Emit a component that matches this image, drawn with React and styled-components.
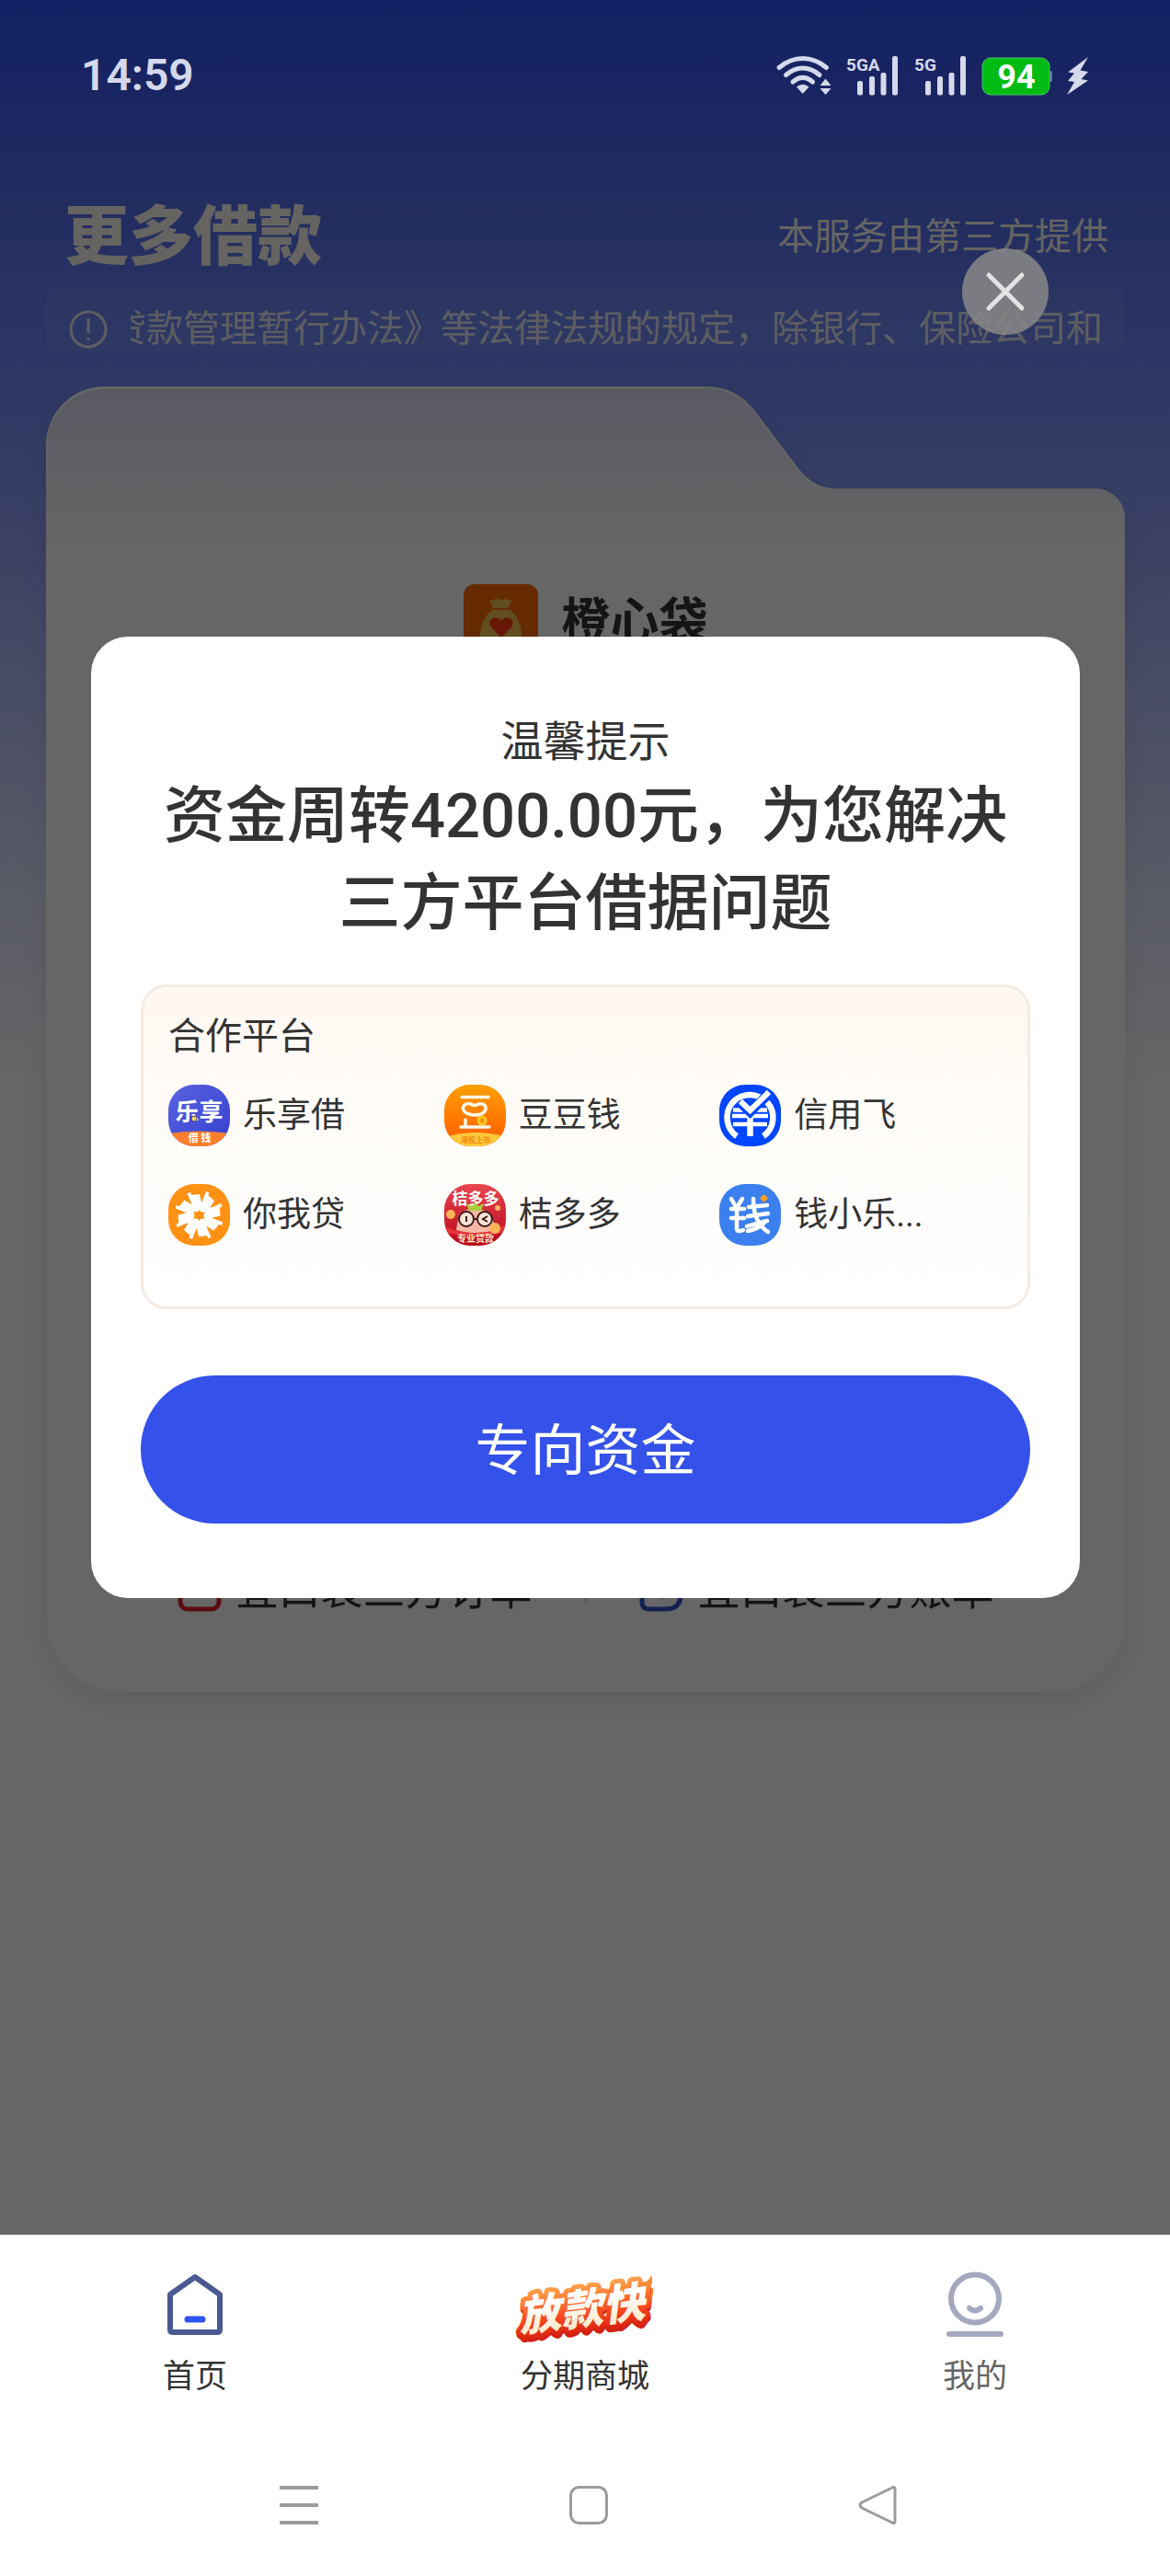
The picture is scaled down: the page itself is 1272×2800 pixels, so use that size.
import React from 'react';
import styled, { createGlobalStyle } from 'styled-components';

const GlobalStyle = createGlobalStyle`
  *, *::before, *::after { box-sizing: border-box; }
  body {
    margin: 0;
    background: #fff;
    color: #333;
    font-family: Roboto, "Noto Sans CJK SC", sans-serif;
  }
  h1, h2, h3, p, ul { margin: 0; padding: 0; font-weight: 400; }
  ul { list-style: none; }
  button { font: inherit; border: 0; padding: 0; background: none; cursor: pointer; }
  a { color: inherit; text-decoration: none; }
  svg { display: block; flex: none; overflow: visible; }
`;

const Shell = styled.div`
  min-height: 100vh;
  display: flex;
  flex-direction: column;
`;

const Stage = styled.div`
  flex: 1;
  display: grid;
  grid-template-columns: minmax(0, 1fr);
  > * { grid-area: 1 / 1; }
`;

/* status bar */
const StatusBar = styled.div`
  z-index: 2;
  align-self: start;
  display: flex;
  align-items: center;
  justify-content: space-between;
  padding: 60px 88px 0;
  color: #d5d9eb;
`;
const Clock = styled.time`
  font-size: 48px;
  line-height: 44px;
  font-weight: 600;
`;
const StatusIcons = styled.div`
  display: flex;
  align-items: center;
  gap: 16px;
`;

/* page below the dialog */
const Page = styled.main`
  padding: 222px 49px 0 50px;
  background: linear-gradient(#2f50f7 0, #5570f0 220px, #7089fa 400px, #97a5fb 600px, #c0c8fd 800px, #e4e8fe 1000px, #fff 1180px);
`;
const PageHeader = styled.header`
  display: flex;
  align-items: center;
  justify-content: space-between;
  padding: 0 18px 0 20px;
  color: #fffaf2;
`;
const PageTitle = styled.h1`
  font-size: 70px;
  line-height: 72px;
  font-weight: 900;
`;
const Provider = styled.p`
  font-size: 40px;
  line-height: 48px;
`;
const Notice = styled.div`
  display: flex;
  align-items: center;
  gap: 24px;
  margin: 18px 0 38px;
  padding: 24px 24px 2px;
  border-radius: 12px;
  background: rgba(255, 255, 255, 0.06);
  color: rgba(255, 250, 242, 0.85);
`;
const NoticeText = styled.div`
  flex: 1;
  min-width: 0;
  display: flex;
  justify-content: flex-end;
  overflow: hidden;
  white-space: nowrap;
  font-size: 40px;
  line-height: 44px;
`;

const Card = styled.section`
  border-radius: 64px 32px 80px 80px;
  filter: drop-shadow(0 10px 14px rgba(0, 0, 0, 0.08));
`;
const CardTab = styled.div`
  display: flex;
`;
const TabFace = styled.div`
  flex: 0 0 61%;
  height: 111px;
  border-top: 3px solid #fff;
  border-left: 1px solid #fff;
  border-radius: 64px 0 0 0;
  background: linear-gradient(#dde0f6, #f4f4fc);
`;
const CardBody = styled.div`
  display: flex;
  flex-direction: column;
  align-items: center;
  gap: 988px;
  padding: 104px 0 87px;
  border-radius: 0 32px 80px 80px;
  background: linear-gradient(#f4f4fc, #fff 70px);
`;
const Brand = styled.div`
  display: flex;
  align-items: center;
  gap: 26px;
`;
const BrandName = styled.h2`
  font-size: 53px;
  line-height: 80px;
  font-weight: 700;
  color: #333;
`;
const QuickLinks = styled.nav`
  display: flex;
  align-items: center;
  gap: 57px;
`;
const QuickLink = styled.a`
  display: flex;
  align-items: center;
  gap: 16px;
  font-size: 46px;
  line-height: 48px;
`;
const Divider = styled.span`
  width: 2px;
  height: 28px;
  background: #ccc;
`;

/* dialog */
const Overlay = styled.div`
  z-index: 1;
  display: flex;
  flex-direction: column;
  padding: 270px 98px 0 99px;
  background: rgba(0, 0, 0, 0.6);
`;
const CloseButton = styled.button`
  align-self: flex-end;
  display: grid;
  place-items: center;
  width: 94px;
  height: 94px;
  margin: 0 34px 328px 0;
  border-radius: 50%;
  background: rgba(134, 134, 134, 0.88);
`;
const Dialog = styled.section`
  display: flex;
  flex-direction: column;
  padding: 86px 54px 81px;
  border-radius: 40px;
  background: #fff;
`;
const DialogLabel = styled.p`
  font-size: 46px;
  line-height: 56px;
  text-align: center;
`;
const DialogTitle = styled.h2`
  margin: 6px 0 40px;
  font-size: 67px;
  line-height: 95px;
  font-weight: 500;
  text-align: center;
  white-space: nowrap;
`;
const Partners = styled.div`
  padding: 30px 35px 66px 27px;
  border: 3px solid #f3eae4;
  border-radius: 28px;
  background: linear-gradient(#fff7f1, #fffcf8 40%, #fff);
`;
const PartnersTitle = styled.h3`
  font-size: 40px;
  line-height: 48px;
`;
const PartnerGrid = styled.ul`
  display: grid;
  grid-template-columns: repeat(3, 1fr);
  row-gap: 41px;
  margin-top: 28px;
`;
const Partner = styled.li`
  display: flex;
  align-items: center;
  gap: 14px;
  font-size: 37px;
  line-height: 48px;
`;
const Logo = styled.svg`
  width: 67px;
  height: 67px;
  border-radius: 28px;
  overflow: hidden;
`;
const PrimaryButton = styled.button`
  height: 161px;
  margin-top: 72px;
  padding-bottom: 8px;
  border-radius: 81px;
  background: #3451e9;
  color: #fff;
  font-size: 60px;
`;

/* bottom bars */
const TabBar = styled.nav`
  display: grid;
  grid-template-columns: repeat(3, 1fr);
  padding: 40px 0 51px;
  background: #fff;
`;
const TabItem = styled.a`
  display: flex;
  flex-direction: column;
  align-items: center;
  gap: 15px;
  font-size: 35px;
  line-height: 48px;
  color: ${(p) => (p.$muted ? '#666' : '#333')};
`;
const SystemBar = styled.div`
  display: grid;
  grid-template-columns: repeat(3, 1fr);
  padding: 42px 160px 55px 167px;
`;
const SystemKey = styled.button`
  display: grid;
  place-items: center;
  height: 44px;
`;

const Wifi = () => (
  <svg width="60" height="44" viewBox="0 0 60 44" fill="none" stroke="currentColor" strokeWidth="5" strokeLinecap="round">
    <path d="M3 13.500C19 .2 38.500 .2 54.500 13.500M10.500 21.500C22 11.500 35.500 11.500 47 21.500M18 29C25 23 32.500 23 39.500 29" />
    <path d="M22 34.500Q28.700 29 35.500 34.500L28.700 42Z" fill="currentColor" stroke="none" />
    <path d="M47.500 33L53.500 25.500 59.500 33ZM47.500 36L53.500 43 59.500 36Z" fill="currentColor" stroke="none" />
  </svg>
);
const Signal = ({ label }) => (
  <svg width="58" height="44" viewBox="0 0 58 44" fill="currentColor" role="img" aria-label={label}>
    <text x="0" y="17" fontSize="19" fontWeight="700" fontFamily="Roboto, sans-serif">{label}</text>
    <rect x="12" y="28" width="6" height="15.500" rx="2" />
    <rect x="25" y="23" width="6" height="20.500" rx="2" />
    <rect x="37.500" y="19" width="6" height="24.500" rx="2" />
    <rect x="50" y="1" width="6" height="42.500" rx="2" />
  </svg>
);
const Battery = () => (
  <svg width="76" height="44" viewBox="0 0 76 44">
    <path d="M73 17h1q2 0 2 2v8q0 2-2 2h-1z" fill="#6b6fae" />
    <rect x="0" y="3" width="73" height="40" rx="9" fill="#00bc12" stroke="#4bc665" />
    <text x="37" y="36" textAnchor="middle" fontSize="36" fontWeight="700" fontFamily="Roboto, sans-serif" fill="#fff">94</text>
  </svg>
);
const Bolt = () => (
  <svg width="24" height="44" viewBox="2 0 24 44" fill="currentColor">
    <path d="M25 2L3 18.500 10 19.500 3 28 10 29 2 43 25 27.500 17.500 26 25 18 16.500 16.500Z" />
  </svg>
);

const logos = {
  lexiang: (
    <Logo viewBox="0 0 67 67">
      <defs><linearGradient id="lx" x2="1" y2="1"><stop stopColor="#5a63e0" /><stop offset="1" stopColor="#3340cf" /></linearGradient></defs>
      <path fill="url(#lx)" d="M0 0h67v67H0z" />
      <path fill="#ff7f2e" d="M0 53Q33 48 67 53V67H0z" />
      <text x="33.500" y="39" textAnchor="middle" fontSize="26" fontWeight="700" fill="#fff">乐享</text>
      <circle cx="28" cy="37" r="3" fill="#ffd65a" stroke="#3a3a70" />
      <text x="34" y="62" textAnchor="middle" fontSize="11" fontWeight="700" fill="#fff">借 钱</text>
    </Logo>
  ),
  doudou: (
    <Logo viewBox="0 0 67 67">
      <defs><linearGradient id="dd" x2="0" y2="1"><stop stopColor="#ffa000" /><stop offset="1" stopColor="#ff5a00" /></linearGradient></defs>
      <path fill="url(#dd)" d="M0 0h67v67H0z" />
      <path fill="#ffc93a" d="M4 56Q34 48 64 56V67H4z" />
      <g fill="none" stroke="#fff8e8" strokeWidth="3.500" strokeLinecap="round" strokeLinejoin="round">
        <path d="M19 13.500H48M18 46H49M23 38V46" />
        <path d="M24 21C29 19 31 24 35 22C41 19 46 22 45 27C43 33 34 34 27 32C19 30 19 23 24 21Z" />
      </g>
      <circle cx="41" cy="39" r="4" fill="#ff9100" stroke="#ffc928" strokeWidth="3" />
      <text x="34" y="63" textAnchor="middle" fontSize="8" fontWeight="700" fill="#f08a10">港股上市</text>
    </Logo>
  ),
  xinyong: (
    <Logo viewBox="0 0 67 67">
      <path fill="#0046ff" d="M0 0h67v67H0z" />
      <g fill="none" stroke="#fff">
        <path d="M19 56A25 25 0 0 1 14 20A25 25 0 0 1 44 13.500M52 19A25 25 0 0 1 48 56" strokeWidth="6.500" />
        <path d="M15 27.500H52M14 34H53M15 43H52" strokeWidth="4.500" />
        <path d="M33.500 28V56" strokeWidth="6.500" />
        <path d="M23 20L33.500 30 54 9" stroke="#0046ff" strokeWidth="10" />
        <path d="M23 18L33.500 28 54 8" strokeWidth="6" />
      </g>
    </Logo>
  ),
  niwo: (
    <Logo viewBox="0 0 67 67">
      <path fill="#ff9215" d="M0 0h67v67H0z" />
      <g fill="#fff">
        {[0, 45, 90, 135, 180, 225, 270, 315].map((a) => (
          <g key={a} transform={`rotate(${a} 33.500 34)`}>
            <path d="M28 31L23 12 34 11 38 28Z" />
            <path d="M36 21L41 8 44.500 9.500 39 23Z" />
          </g>
        ))}
      </g>
      <path fill="#ff9215" d="M33.500 28l2 3 4-1-1 4 1 4-4-1-2 3-2-3-4 1 1-4-1-4 4 1z" />
    </Logo>
  ),
  jieduo: (
    <Logo viewBox="0 0 67 67">
      <defs><linearGradient id="jd" x2="0" y2="1"><stop stopColor="#e84552" /><stop offset="1" stopColor="#b80718" /></linearGradient></defs>
      <path fill="url(#jd)" d="M0 0h67v67H0z" />
      <path fill="#e7343a" d="M0 46Q33 60 67 44V52Q34 62 0 52z" />
      <path fill="#f6b9a4" d="M16 33Q33 20 51 33L56 50Q34 56 13 50Z" />
      <text x="34" y="22" textAnchor="middle" fontSize="17" fontWeight="700" fill="#fff">桔多多</text>
      <path fill="#a9cf3e" d="M24 21l6 3 4-4 3 4 6-3-3 8H27z" />
      <g fill="#fbe3d8" stroke="#3a1a1a" strokeWidth="2">
        <circle cx="24" cy="38" r="8" />
        <circle cx="44" cy="38" r="8" />
        <path d="M32 38h4M24 35v6M47 35l-5 3 5 3" />
      </g>
      <circle cx="7" cy="33" r="5" fill="#f9b55a" />
      <circle cx="55" cy="48" r="6" fill="#f9b55a" />
      <circle cx="58" cy="26" r="3" fill="#f9b55a" />
      <text x="34" y="63" textAnchor="middle" fontSize="10" fontWeight="700" fill="#ffe9cf">专业贷款</text>
    </Logo>
  ),
  qianxiao: (
    <Logo viewBox="0 0 67 67">
      <path fill="#3b80ee" d="M0 0h67v67H0z" />
      <g fill="none" stroke="#fff" strokeWidth="4.500" strokeLinecap="round" strokeLinejoin="round">
        <path d="M13 16L17 23M25 16L20 24M13 27H27M13 37H27M19 27V48Q19 53 26 50" />
        <path d="M32 25L52 23M31 35L53 32M30 46L52 40M37 16Q37 42 53 52M49 42Q40 50 31 51" />
      </g>
      <path fill="#ff9f1a" d="M48.500 11l4.500 4.500-4.500 4.500-4.500-4.500z" />
    </Logo>
  ),
};

const partners = [
  ['lexiang', '乐享借'],
  ['doudou', '豆豆钱'],
  ['xinyong', '信用飞'],
  ['niwo', '你我贷'],
  ['jieduo', '桔多多'],
  ['qianxiao', '钱小乐...'],
];

const HomeIcon = () => (
  <svg width="72" height="76" viewBox="0 0 72 76" fill="none">
    <path d="M36 6L63 25V63Q63 66 60 66H12Q9 66 9 63V25Z" stroke="#4a5991" strokeWidth="6" strokeLinejoin="round" />
    <path d="M28 52H44" stroke="#2c54ee" strokeWidth="7" strokeLinecap="round" />
  </svg>
);
const ShopIcon = () => (
  <svg width="156" height="76" viewBox="0 0 156 76">
    <defs>
      <linearGradient id="fire" x2="0" y2="1"><stop stopColor="#ffa04a" /><stop offset=".6" stopColor="#f8481f" /><stop offset="1" stopColor="#d81c10" /></linearGradient>
      <linearGradient id="cream" x2="0" y2="1"><stop offset=".3" stopColor="#fff" /><stop offset="1" stopColor="#ffe3bd" /></linearGradient>
    </defs>
    <path d="M132 20Q130 8 139 13Q147 12 150 4Q153 12 148 18Q154 16 152 24L148 44Z" fill="#ff8a26" />
    <g transform="rotate(-7 78 40)" fontSize="46" fontWeight="900" fontStyle="italic" textAnchor="middle">
      <text x="74" y="60" fill="#cf2414" stroke="#cf2414" strokeWidth="10" strokeLinejoin="round" aria-hidden="true">放款快</text>
      <text x="74" y="57" fill="url(#cream)" stroke="url(#fire)" strokeWidth="10" strokeLinejoin="round" paintOrder="stroke">放款快</text>
    </g>
  </svg>
);
const MeIcon = () => (
  <svg width="72" height="76" viewBox="0 0 72 76" fill="none" stroke="#a4a9bf" strokeWidth="6" strokeLinecap="round">
    <circle cx="36" cy="29.500" r="26" />
    <path d="M30 40Q36 45 42 40" />
    <path d="M8 68H64" />
  </svg>
);

export default function App() {
  return (
    <Shell>
      <GlobalStyle />
      <Stage>
        <StatusBar>
          <Clock>14:59</Clock>
          <StatusIcons>
            <Wifi />
            <Signal label="5GA" />
            <Signal label="5G" />
            <Battery />
            <Bolt />
          </StatusIcons>
        </StatusBar>

        <Page>
          <PageHeader>
            <PageTitle>更多借款</PageTitle>
            <Provider>本服务由第三方提供</Provider>
          </PageHeader>
          <Notice>
            <svg width="44" height="44" viewBox="0 0 44 44" fill="none" stroke="currentColor" strokeWidth="3" strokeLinecap="round">
              <circle cx="22" cy="22" r="19" />
              <path d="M22 11V25M22 32V32.500" />
            </svg>
            <NoticeText>
              <span>贷款管理暂行办法》等法律法规的规定，除银行、保险公司和</span>
            </NoticeText>
          </Notice>
          <Card>
            <CardTab>
              <TabFace />
              <svg width="144" height="111" viewBox="0 0 144 111">
                <defs><linearGradient id="tab" x2="0" y2="1"><stop stopColor="#dde0f6" /><stop offset="1" stopColor="#f4f4fc" /></linearGradient></defs>
                <path d="M0 0C26 0 42 10 55 27L99 85C112 103 125 111 144 111H0Z" fill="url(#tab)" />
                <path d="M0 1.500C26 1.500 41 11 54 28L98 86C111 104 122 110 134 111" fill="none" stroke="#fff" strokeOpacity=".7" strokeWidth="2" />
              </svg>
            </CardTab>
            <CardBody>
              <Brand>
                <svg width="81" height="81" viewBox="0 0 81 81">
                  <rect width="81" height="81" rx="12" fill="#ff6a00" />
                  <path d="M28 17Q33 19 35 15Q41 19 46 15Q48 19 53 17L48 26H32Z" fill="#f0c050" />
                  <path d="M32 28H50Q63 36 63 58Q63 72 41 72Q18 72 18 58Q18 36 32 28Z" fill="#f0c050" />
                  <path d="M41 58L30 47Q26 40 32 37Q38 35 41 40Q44 35 50 37Q56 40 52 47Z" fill="#ff3a10" />
                </svg>
                <BrandName>橙心袋</BrandName>
              </Brand>
              <QuickLinks>
                <QuickLink href="#orders">
                  <svg width="48" height="48" viewBox="0 0 48 48" fill="none" stroke="#e5202a" strokeWidth="5">
                    <rect x="3" y="3" width="42" height="42" rx="8" />
                  </svg>
                  宜口袋三方订单
                </QuickLink>
                <Divider />
                <QuickLink href="#bills">
                  <svg width="48" height="48" viewBox="0 0 48 48" fill="none" stroke="#3451c9" strokeWidth="5">
                    <path d="M3 3H45V29Q45 45 29 45H11Q3 45 3 37Z" />
                    <path d="M17 28Q24 34 31 28" />
                  </svg>
                  宜口袋三方账单
                </QuickLink>
              </QuickLinks>
            </CardBody>
          </Card>
        </Page>

        <Overlay>
          <CloseButton aria-label="关闭">
            <svg width="46" height="46" viewBox="0 0 46 46" stroke="#e2e2e4" strokeWidth="5" strokeLinecap="round">
              <path d="M5 5L41 41M41 5L5 41" />
            </svg>
          </CloseButton>
          <Dialog role="dialog" aria-labelledby="dialog-title">
            <DialogLabel>温馨提示</DialogLabel>
            <DialogTitle id="dialog-title">
              资金周转4200.00元，为您解决
              <br />
              三方平台借据问题
            </DialogTitle>
            <Partners>
              <PartnersTitle>合作平台</PartnersTitle>
              <PartnerGrid>
                {partners.map(([key, name]) => (
                  <Partner key={key}>
                    {logos[key]}
                    {name}
                  </Partner>
                ))}
              </PartnerGrid>
            </Partners>
            <PrimaryButton>专向资金</PrimaryButton>
          </Dialog>
        </Overlay>
      </Stage>

      <TabBar>
        <TabItem href="#home">
          <HomeIcon />
          首页
        </TabItem>
        <TabItem href="#shop">
          <ShopIcon />
          分期商城
        </TabItem>
        <TabItem href="#me" $muted>
          <MeIcon />
          我的
        </TabItem>
      </TabBar>
      <SystemBar>
        <SystemKey aria-label="菜单">
          <svg width="44" height="44" viewBox="0 0 44 44" stroke="#9b9b9b" strokeWidth="4">
            <path d="M1 3H43M1 22H43M1 41H43" />
          </svg>
        </SystemKey>
        <SystemKey aria-label="主页">
          <svg width="44" height="44" viewBox="0 0 44 44" fill="none" stroke="#9b9b9b" strokeWidth="3">
            <rect x="2.500" y="2.500" width="39" height="39" rx="9" />
          </svg>
        </SystemKey>
        <SystemKey aria-label="返回">
          <svg width="44" height="44" viewBox="0 0 44 44" fill="none" stroke="#9b9b9b" strokeWidth="3" strokeLinejoin="round">
            <path d="M37 3Q40 1 40 5V39Q40 43 37 41L4 25Q0 22 4 19Z" />
          </svg>
        </SystemKey>
      </SystemBar>
    </Shell>
  );
}
